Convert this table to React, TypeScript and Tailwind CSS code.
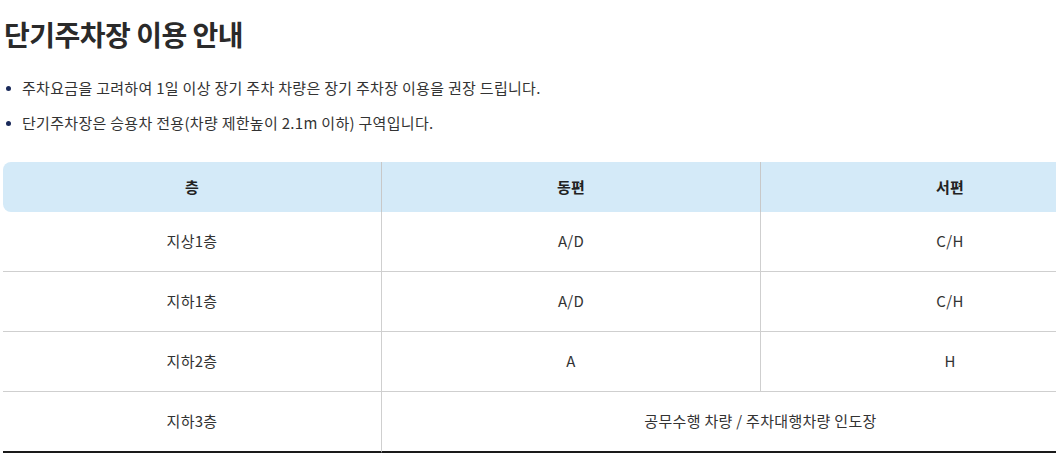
import React from 'react'

const rows = [
  { floor: '지상1층', east: 'A/D', west: 'C/H' },
  { floor: '지하1층', east: 'A/D', west: 'C/H' },
  { floor: '지하2층', east: 'A', west: 'H' },
]

const notes = [
  '주차요금을 고려하여 1일 이상 장기 주차 차량은 장기 주차장 이용을 권장 드립니다.',
  '단기주차장은 승용차 전용(차량 제한높이 2.1m 이하) 구역입니다.',
]

const App = () => {
  return (
    <div
      className="w-[1056px] h-[463px] overflow-hidden bg-white pl-[3px] text-[#333]"
      style={{ fontFamily: '"Noto Sans CJK KR", "Noto Sans", sans-serif' }}
    >
      <h1 className="pl-[1px] pt-[15px] text-[28px] font-bold leading-[38px] tracking-[-0.5px] text-[#2a2a2a]">
        단기주차장 이용 안내
      </h1>

      <ul className="mt-[24px] flex flex-col gap-[13px]">
        {notes.map((n) => (
          <li key={n} className="flex items-center text-[15px] leading-[22px] tracking-[0.3px]">
            <span className="ml-[3px] mr-[11px] h-[5px] w-[5px] rounded-full bg-[#1a2a5a]" />
            {n}
          </li>
        ))}
      </ul>

      <div className="mt-[28px] w-[1136px]">
        <table className="w-full table-fixed border-separate border-spacing-0 text-center text-[15px] tracking-[0.3px]">
          <colgroup>
            <col className="w-[378px]" />
            <col className="w-[379px]" />
            <col className="w-[379px]" />
          </colgroup>
          <thead>
            <tr className="h-[50px] bg-[#d4eaf8] font-bold text-[#222]">
              <th className="rounded-l-lg">층</th>
              <th className="border-l border-[#c8c8c8]">동편</th>
              <th className="border-l border-[#c8c8c8]">서편</th>
            </tr>
          </thead>
          <tbody>
            {rows.map((r) => (
              <tr key={r.floor} className="h-[60px]">
                <td className="border-b border-[#cfcfcf]">{r.floor}</td>
                <td className="border-b border-l border-[#cfcfcf]">{r.east}</td>
                <td className="border-b border-l border-[#cfcfcf]">{r.west}</td>
              </tr>
            ))}
            <tr className="h-[61px]">
              <td className="border-b-2 border-[#1a1a1a]">지하3층</td>
              <td colSpan={2} className="border-b-2 border-l border-b-[#1a1a1a] border-l-[#cfcfcf]">
                공무수행 차량 / 주차대행차량 인도장
              </td>
            </tr>
          </tbody>
        </table>
      </div>
    </div>
  )
}

export default App
